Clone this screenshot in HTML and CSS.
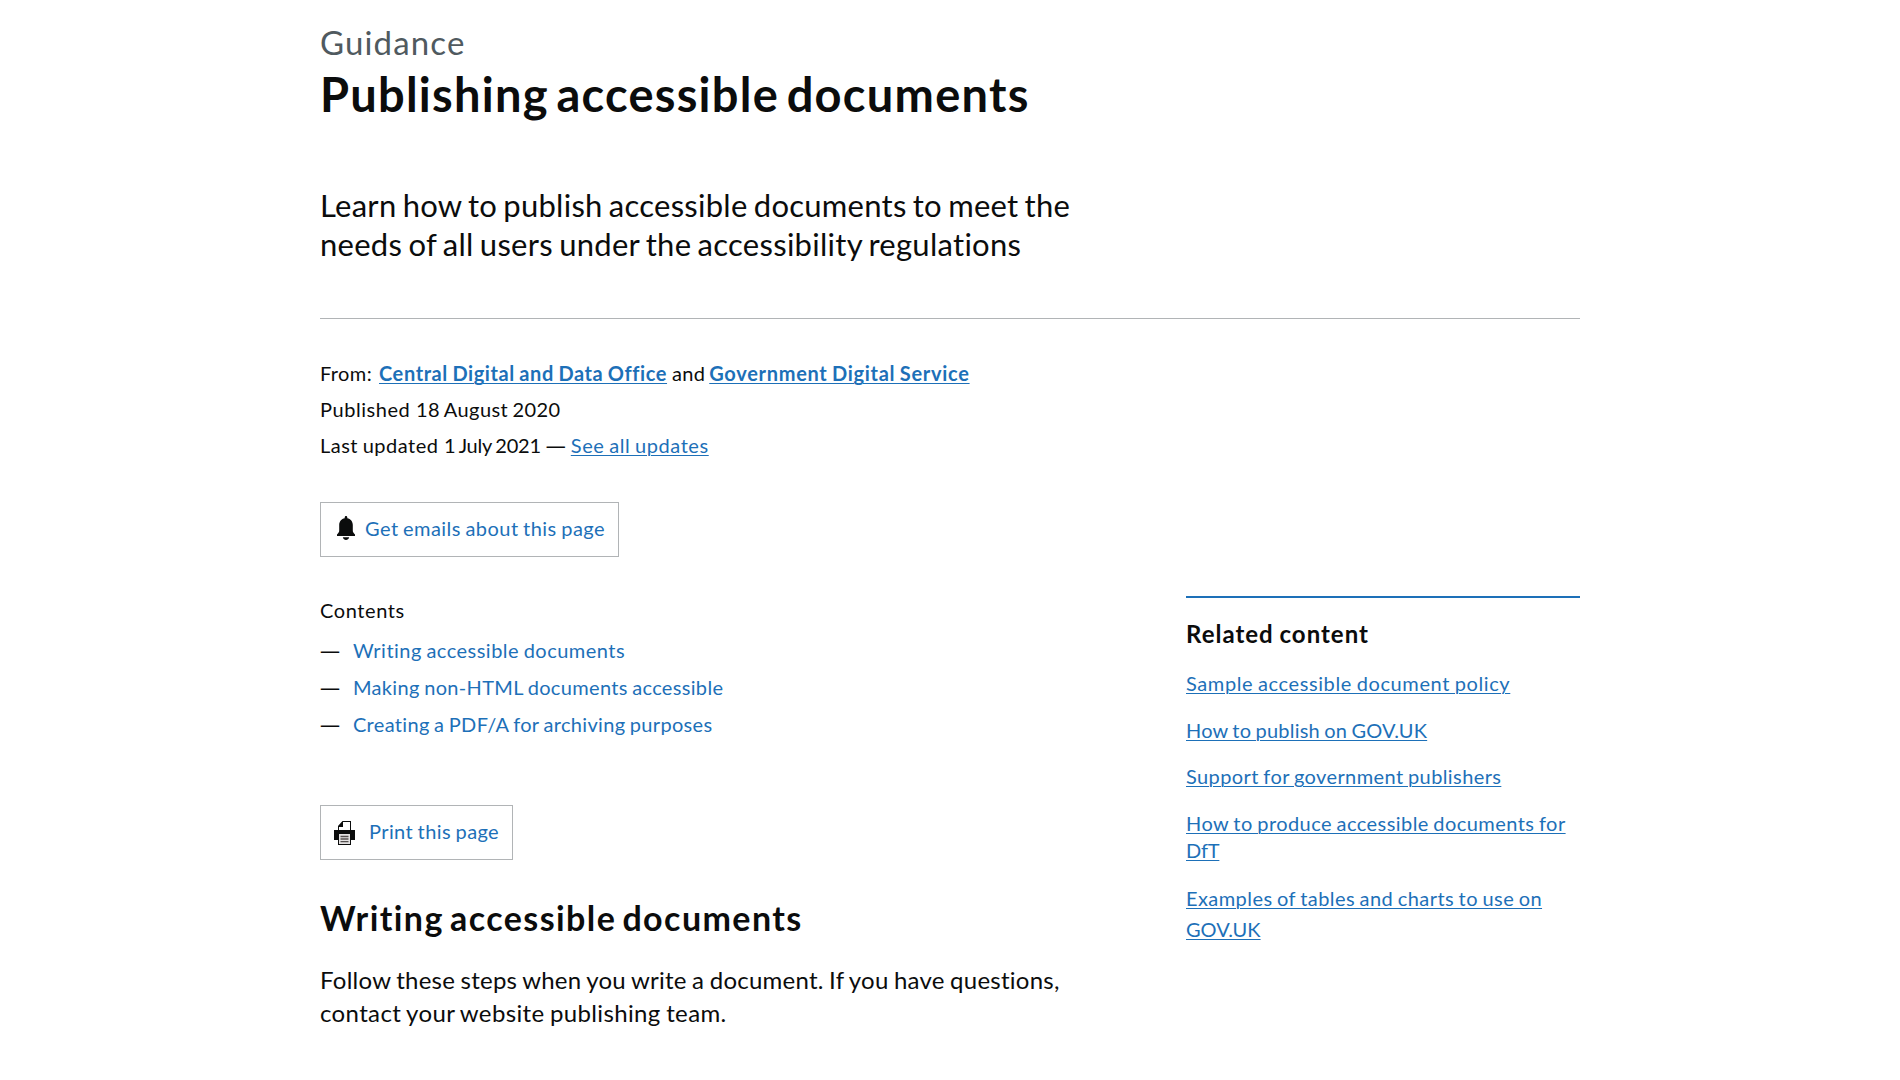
FILE: index.html
```html
<!DOCTYPE html>
<html lang="en">
<head>
<meta charset="utf-8">
<title>Publishing accessible documents - GOV.UK</title>
<link rel="stylesheet" href="styles.css">
</head>
<body>
<main class="page">
  <header class="title">
    <p class="caption">Guidance</p>
    <h1 class="heading-xl">Publishing accessible documents</h1>
  </header>
  <p class="lead">Learn how to publish accessible documents to meet the<br><span class="lead-end">needs of all users under the accessibility regulations</span></p>
  <hr class="rule">
  <dl class="meta">
    <div class="meta-row"><dt class="from">From:</dt><dd><a class="org org-first" href="#">Central Digital and Data Office</a><span class="and">and</span><a class="org org-second" href="#">Government Digital Service</a></dd></div>
    <div class="meta-row"><dt class="published">Published</dt><dd class="date">18 August 2020</dd></div>
    <div class="meta-row"><dt class="updated">Last updated</dt><dd><span class="date-updated">1 July 2021</span><span class="dash">—</span><a class="updates" href="#">See all updates</a></dd></div>
  </dl>
  <a class="button button-email" href="#">
    <svg class="bell" width="18" height="24" viewBox="0 0 18 24" aria-hidden="true"><path fill="#0b0c0c" d="M9 0c.9 0 1.300.7 1.300 1.500v.7C13.600 2.800 15.800 5.600 15.800 9v5.500c0 1.700.8 2.600 2.200 4V20H0v-1.500c1.400-1.400 2.200-2.300 2.200-4V9c0-3.400 2.200-6.200 5.500-6.800v-.7C7.700.7 8.100 0 9 0zM5.800 21.300h6.400C11.700 23 10.500 24 9 24s-2.700-1-3.200-2.700z"/></svg>
    <span>Get emails about this page</span>
  </a>
  <div class="columns">
    <div class="main-column">
      <nav class="contents">
        <h2 class="contents-title">Contents</h2>
        <ol class="contents-list">
          <li><span class="list-dash">—</span><a class="c-writing" href="#writing">Writing accessible documents</a></li>
          <li><span class="list-dash">—</span><a class="c-making" href="#">Making non-HTML documents accessible</a></li>
          <li><span class="list-dash">—</span><a class="c-creating" href="#">Creating a PDF/A for archiving purposes</a></li>
        </ol>
      </nav>
      <a class="button button-print" href="#">
        <svg class="printer" width="21" height="24" viewBox="0 0 21 24" aria-hidden="true"><path fill="#0b0c0c" d="M8.500 0H17v9h4v10h-4v5H4v-5H0V9h4V5z"/><path fill="#fff" d="M9 1h7v8H5V6h4z"/><path fill="#e4e2e2" d="M5 13h11v10H5z"/><path stroke="#55504f" stroke-width="1.300" d="M6.500 15.500h8M6.500 18h8M6.500 20.700h8"/></svg>
        <span>Print this page</span>
      </a>
      <h2 class="heading-l" id="writing">Writing accessible documents</h2>
      <p class="body-text">Follow these steps when you write a document. If you have questions,<br><span class="body-end">contact your website publishing team.</span></p>
    </div>
    <aside class="related">
      <h2 class="related-title">Related content</h2>
      <ul class="related-list">
        <li><a class="r-sample" href="#">Sample accessible document policy</a></li>
        <li><a class="r-publish" href="#">How to publish on GOV.UK</a></li>
        <li><a class="r-support" href="#">Support for government publishers</a></li>
        <li><a class="r-produce" href="#">How to produce accessible documents for<br><span class="r-tail">DfT</span></a></li>
        <li class="related-last"><a class="r-examples" href="#">Examples of tables and charts to use on<br><span class="r-end">GOV.UK</span></a></li>
      </ul>
    </aside>
  </div>
</main>
</body>
</html>
```
FILE: styles.css
```css
* { box-sizing: border-box; margin: 0; padding: 0; }
html { overflow: hidden; }
body {
  height: 1080px;
  overflow: hidden;
  background: #fff;
  color: #0b0c0c;
  font: 20px/26px Lato, "Liberation Sans", sans-serif;
  word-spacing: -1px;
}
a {
  color: #1d70b8;
  text-decoration-thickness: 1px;
  text-underline-offset: 2px;
}
.page { width: 1260px; margin: 0 auto; padding-top: 22px; }
.caption { color: #505a5f; font-size: 33px; line-height: 40px; letter-spacing: 1.15px; }
.heading-xl { margin-top: 7px; font-size: 47px; line-height: 50px; letter-spacing: 1.25px; word-spacing: -5px; }
.lead { margin-top: 67px; font-size: 31px; line-height: 39px; letter-spacing: .26px; word-spacing: -2px; }
.lead-end { letter-spacing: .28px; }
.rule { margin-top: 54px; border: 0; border-top: 1px solid #b1b4b6; }

.meta { margin-top: 36px; line-height: 36px; }
.meta-row { display: flex; white-space: pre; }
.from { width: 59px; letter-spacing: .4px; }
.org { font-weight: 700; }
.org-first { letter-spacing: .6px; }
.and { margin: 0 4px 0 5px; letter-spacing: .3px; }
.org-second { letter-spacing: .7px; }
.published { width: 96px; letter-spacing: .55px; }
.date { letter-spacing: .4px; }
.updated { width: 124px; letter-spacing: .5px; }
.date-updated { letter-spacing: -.25px; }
.dash, .list-dash { font-family: "Noto Sans", sans-serif; line-height: 20px; }
.dash { margin: 0 5px; }
.updates { letter-spacing: .58px; }

.button {
  display: flex;
  align-items: center;
  height: 55px;
  padding-bottom: 4px;
  border: 1px solid #b1b4b6;
  text-decoration: none;
  letter-spacing: .45px;
  white-space: nowrap;
}
.button-email { width: 299px; margin: 39px 0; padding-left: 16px; gap: 10px; }
.button-print { width: 193px; margin-top: 62px; padding-left: 13px; gap: 14px; letter-spacing: .4px; }
.printer { margin-top: 5px; }

.columns { display: grid; grid-template-columns: 1fr 394px; align-items: start; }
.contents { padding-top: 1px; }
.contents-title { font-size: 20px; font-weight: 400; letter-spacing: .6px; }
.contents-list { margin-top: 9px; list-style: none; line-height: 37px; }
.contents-list li { display: flex; }
.contents-list a { text-decoration: none; }
.list-dash { width: 33px; line-height: 37px; }
.c-writing { letter-spacing: .48px; }
.c-making { letter-spacing: .33px; }
.c-creating { letter-spacing: .32px; }
.heading-l { margin-top: 38px; font-size: 34px; line-height: 40px; letter-spacing: 1.42px; word-spacing: -3.5px; }
.body-text { margin-top: 25px; font-size: 24px; line-height: 33px; letter-spacing: .25px; }
.body-end { letter-spacing: .36px; }

.related { padding-top: 21px; border-top: 2px solid #1d70b8; }
.related-title { font-size: 24px; line-height: 30px; letter-spacing: 1px; }
.related-list { display: grid; gap: 19.6px; margin-top: 21px; list-style: none; line-height: 27px; }
.related-last { line-height: 31px; }
.r-sample { letter-spacing: .61px; }
.r-publish { letter-spacing: .2px; }
.r-support { letter-spacing: .4px; }
.r-produce { letter-spacing: .44px; }
.r-examples { letter-spacing: .43px; }
.r-tail { letter-spacing: -.2px; }
.r-end { letter-spacing: 0; }
```
